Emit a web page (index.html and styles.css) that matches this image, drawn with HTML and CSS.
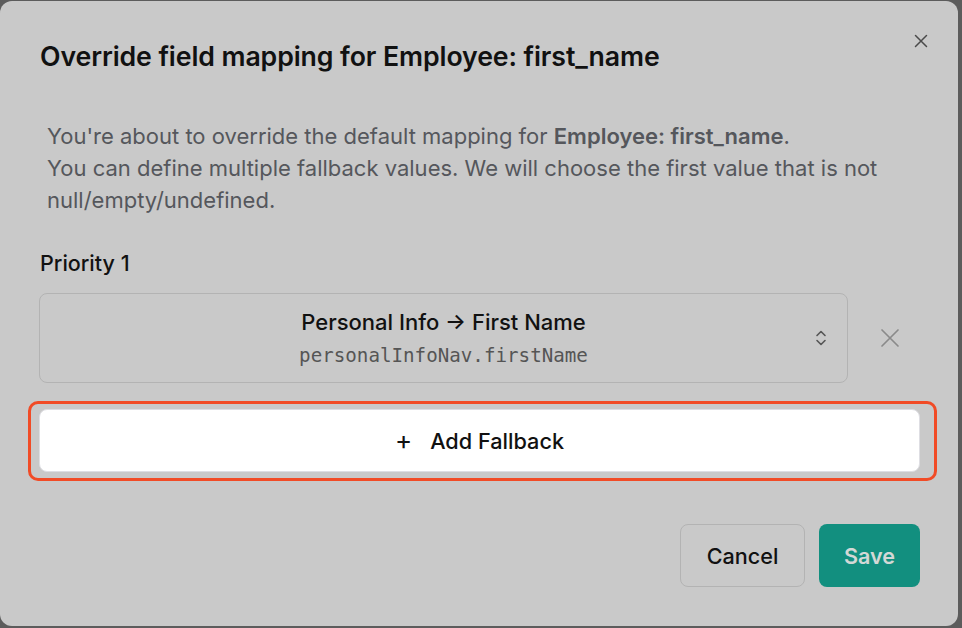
FILE: index.html
```html
<!DOCTYPE html>
<html lang="en">
<head>
    <meta charset="UTF-8">
    <meta name="viewport" content="width=device-width, initial-scale=1.0">
    <title>Override field mapping</title>
    <link rel="stylesheet" href="styles.css">
</head>
<body>
    <div class="dialog">
        <div class="dialog-header">
            <h1 class="dialog-title">Override field mapping for Employee: first_name</h1>
            <button class="close-btn" aria-label="Close">
                <svg width="14" height="14" viewBox="0 0 14 14"><path d="M1.5 1.5 L12.5 12.5 M12.5 1.5 L1.5 12.5" stroke="#4a4a4a" stroke-width="1.5" stroke-linecap="round"/></svg>
            </button>
        </div>

        <p class="description">
            You're about to override the default mapping for <strong>Employee: first_name</strong>.<br>
            You can define multiple fallback values. We will choose the first value that is not null/empty/undefined.
        </p>

        <div class="priority-label">Priority 1</div>
        <div class="mapping-row">
            <div class="mapping-select">
                <div class="mapping-name">Personal Info → First Name</div>
                <div class="mapping-path">personalInfoNav.firstName</div>
                <svg class="chevrons" width="14" height="20" viewBox="0 0 14 20"><path d="M3 7.5 L7 3.5 L11 7.5 M3 12.5 L7 16.5 L11 12.5" fill="none" stroke="#555" stroke-width="1.6" stroke-linecap="round" stroke-linejoin="round"/></svg>
            </div>
            <button class="remove-btn" aria-label="Remove">
                <svg width="20" height="20" viewBox="0 0 20 20"><path d="M2 2 L18 18 M18 2 L2 18" stroke="#8a8a8a" stroke-width="1.7" stroke-linecap="round"/></svg>
            </button>
        </div>

        <div class="highlight">
            <button class="add-btn"><span class="plus">+</span>Add Fallback</button>
        </div>

        <div class="dialog-footer">
            <button class="btn btn-cancel">Cancel</button>
            <button class="btn btn-save">Save</button>
        </div>
    </div>
</body>
</html>
```

FILE: styles.css
```css
body {
    margin: 0;
    height: 628px;
    background-color: #5c5c5c;
    font-family: Inter, "Noto Sans", sans-serif;
    padding: 1px 4px 0 0;
    box-sizing: border-box;
}
button {
    font-family: inherit;
    cursor: pointer;
}
.dialog {
    background-color: #c9c9c9;
    border-radius: 12px;
    height: 625px;
    box-sizing: border-box;
    padding: 39px 38px 39px 39px;
    display: flex;
    flex-direction: column;
}
.dialog-header {
    display: flex;
    justify-content: space-between;
    align-items: flex-start;
}
.dialog-title {
    margin: 0 0 0 1px;
    font-size: 26.7px;
    line-height: 32px;
    font-weight: 600;
    color: #111;
    letter-spacing: -0.1px;
}
.close-btn {
    background: none;
    border: none;
    padding: 0;
    margin: -17px -19px 0 0;
    width: 36px;
    height: 36px;
    display: flex;
    align-items: center;
    justify-content: center;
}
.description {
    margin: 48px 0 0 8px;
    font-size: 22px;
    line-height: 32px;
    color: #55575c;
}
.description strong {
    font-weight: 600;
}
.priority-label {
    margin: 33px 0 0 1px;
    font-size: 21.5px;
    line-height: 28px;
    font-weight: 500;
    color: #111;
}
.mapping-row {
    margin-top: 16px;
    display: flex;
    align-items: center;
}
.mapping-select {
    flex: 0 0 809px;
    box-sizing: border-box;
    height: 90px;
    border: 1px solid #b3b3b3;
    border-radius: 8px;
    display: flex;
    flex-direction: column;
    align-items: center;
    justify-content: center;
    position: relative;
}
.mapping-name {
    font-size: 22px;
    line-height: 28px;
    font-weight: 500;
    color: #111;
}
.mapping-path {
    margin-top: 8px;
    font-family: "DejaVu Sans Mono", "Liberation Mono", monospace;
    font-size: 19.2px;
    line-height: 24px;
    color: #555;
}
.chevrons {
    position: absolute;
    right: 19px;
    top: 34px;
}
.remove-btn {
    background: none;
    border: none;
    padding: 0;
    margin-left: 32px;
    width: 20px;
    height: 20px;
}
.highlight {
    margin: 18px -17px 0 -11px;
    padding: 5px 14px 6px 8px;
    border: 3px solid #f14b26;
    border-radius: 10px;
}
.add-btn {
    width: 100%;
    height: 63px;
    background-color: #fff;
    border: 1px solid #dedee3;
    border-radius: 8px;
    font-size: 21.7px;
    font-weight: 500;
    color: #111;
    display: flex;
    align-items: center;
    justify-content: center;
}
.plus {
    font-size: 26px;
    font-weight: 400;
    margin-right: 18px;
    margin-top: -2px;
}
.dialog-footer {
    margin-top: auto;
    display: flex;
    justify-content: flex-end;
    gap: 14px;
}
.btn {
    height: 63px;
    border-radius: 8px;
    font-size: 21.6px;
    font-weight: 500;
}
.btn-cancel {
    width: 125px;
    background: none;
    border: 1px solid #b3b3b3;
    color: #111;
}
.btn-save {
    width: 101px;
    background-color: #128f7f;
    border: none;
    color: #d3d8d6;
    font-weight: 600;
}
```
